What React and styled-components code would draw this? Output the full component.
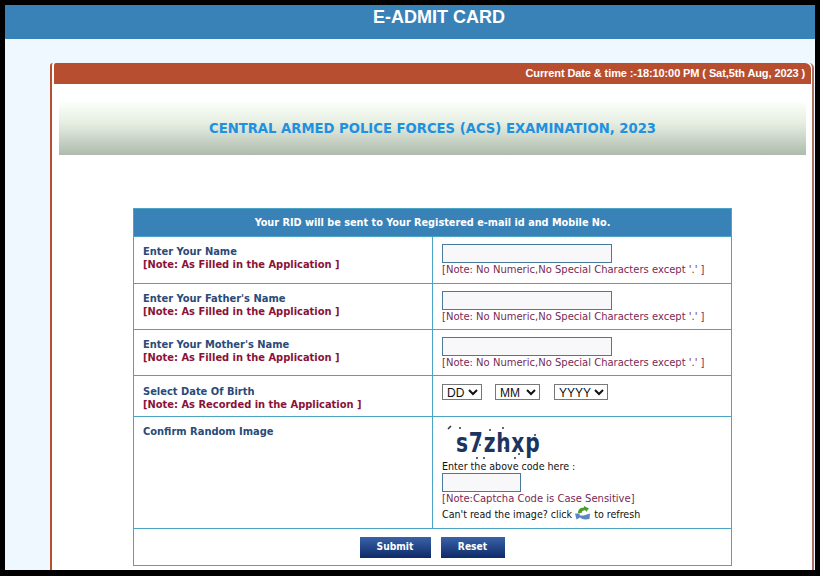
import React from 'react';
import styled, { createGlobalStyle } from 'styled-components';

const Global = createGlobalStyle`
  html, body { margin: 0; padding: 0; background: #000; height: 576px; overflow: hidden; }
`;
const Frame = styled.div`
  width: 810px; height: 565px; margin: 5px 5px 6px; background: #f0f8ff; overflow: hidden;
  font-family: "DejaVu Sans", sans-serif;
`;
const Header = styled.div`
  height: 34px; background: #3882b8; color: #fff; box-sizing: border-box;
  padding: 3px 0 0 58px; text-align: center;
  font: bold 18px/18px "Liberation Sans", Arial, sans-serif;
`;
const Panel = styled.div`
  margin: 27px 1px 0 45px; height: 510px; background: #fff; box-sizing: border-box;
  border-left: 2px solid #b84e30; border-right: 2px solid #a8705e;
  border-top-left-radius: 3px; border-top-right-radius: 5px;
`;
const DateBar = styled.div`
  height: 21px; margin: -3px 1px 0 2px; background: #b84e30; color: #fff; box-sizing: border-box;
  padding: 3px 6px 0 0; text-align: right; border-radius: 2px 6px 0 0; letter-spacing: -0.1px;
  font: bold 11px/14px "Liberation Sans", Arial, sans-serif;
`;
const Banner = styled.div`
  height: 53px; margin: 18px 6px 0 7px; box-sizing: border-box;
  display: flex; align-items: center; justify-content: center;
  background: linear-gradient(#fbfffa, #e6eee2 40%, #adbbad);
  color: #2090e0; font: bold 13.2px/16px "DejaVu Sans", sans-serif;
`;
const FormTable = styled.table`
  margin: 53px 0 0 81px; width: 599px; border-collapse: collapse; table-layout: fixed;
  border: 1px solid #4ba4c6;
`;
const TitleCell = styled.th`
  height: 27px; padding: 0; background: #3882b8; color: #fff; text-align: center;
  border: 1px solid #4ba4c6; font: bold 10.8px/14px "DejaVu Sans Condensed", "DejaVu Sans", sans-serif;
`;
const Row = styled.tr`
  height: ${p => p.$h}px;
`;
const LabelCell = styled.td`
  width: 299px; box-sizing: border-box; padding: ${p => p.$pad || 8}px 9px 0; vertical-align: top;
  border: 1px solid #4ba4c6;
`;
const FieldCell = styled.td`
  padding: ${p => p.$pad || 7}px 9px 0; vertical-align: top; border: 1px solid #4ba4c6;
`;
const Label = styled.div`
  color: #2a4a78; font: bold 11px/13px "DejaVu Sans Condensed", "DejaVu Sans", sans-serif;
`;
const LabelNote = styled.div`
  color: #8a1238; font: bold 11px/13px "DejaVu Sans Condensed", "DejaVu Sans", sans-serif;
`;
const FieldNote = styled.div`
  color: #7a2a55; font: 10px/13px "DejaVu Sans", sans-serif;
`;
const TextInput = styled.input`
  display: block; width: ${p => p.$w}px; height: 19px; box-sizing: border-box; margin: 0;
  border: 1px solid #4a7a9a; background: #f8f8fa; padding: 0;
`;
const DateRow = styled.div`
  display: flex; align-items: center;
`;
const DateSelect = styled.select`
  width: ${p => p.$w}px; height: 16px; margin-right: ${p => p.$gap}px; box-sizing: border-box; padding: 0;
  border: 1px solid #777; background: #fff; color: #111; border-radius: 0;
  font: 12px/14px "Liberation Sans", Arial, sans-serif;
`;
const Captcha = styled.div`
  position: relative; width: 110px; height: 37px;
`;
const CaptchaText = styled.span`
  display: block; padding: 5px 0 0 14px; color: #1c3560; letter-spacing: 1px; white-space: nowrap;
  font: bold 27px/29px "DejaVu Sans", sans-serif; transform: scaleX(.75); transform-origin: 14px 0;
`;
const CaptchaSpeckles = styled.svg`
  position: absolute; left: 0; top: 0;
`;
const PlainLine = styled.div`
  color: #111; font: 10.6px/13px "DejaVu Sans Condensed", "DejaVu Sans", sans-serif; white-space: nowrap;
  margin-top: ${p => p.$mt || 0}px; height: ${p => p.$h || 13}px;
`;
const RefreshIcon = styled.svg`
  vertical-align: -2px; margin: 0 4px 0 3px;
`;
const ButtonCell = styled.td`
  height: 36px; padding: 0; text-align: center; border: 1px solid #4ba4c6;
`;
const ButtonBar = styled.div`
  display: flex; justify-content: center; gap: 10px; margin-left: -1px;
`;
const ActionButton = styled.button`
  width: ${p => p.$w}px; height: 21px; padding: 0; border: 0;
  background: linear-gradient(#3a62a8, #0e2a68); color: #fff;
  font: bold 10.2px/14px "DejaVu Sans Condensed", "DejaVu Sans", sans-serif;
`;

const nameRows = [
  { label: 'Enter Your Name', h: 47 },
  { label: "Enter Your Father's Name", h: 46 },
  { label: "Enter Your Mother's Name", h: 46 },
];
const speckles = [[18,5],[48,7],[61,5],[35,35],[42,35],[73,35],[38,22],[63,25],[93,12],[77,31]];

export default function App() {
  return (
    <>
      <Global />
      <Frame>
        <Header>E-ADMIT CARD</Header>
        <Panel>
          <DateBar>Current Date &amp; time :-18:10:00 PM ( Sat,5th Aug, 2023 )</DateBar>
          <Banner>CENTRAL ARMED POLICE FORCES (ACS) EXAMINATION, 2023</Banner>
          <FormTable>
            <colgroup><col width="299" /><col /></colgroup>
            <tbody>
              <tr><TitleCell colSpan={2}>Your RID will be sent to Your Registered e-mail id and Mobile No.</TitleCell></tr>
              {nameRows.map(r => (
                <Row $h={r.h} key={r.label}>
                  <LabelCell>
                    <Label>{r.label}</Label>
                    <LabelNote>[Note: As Filled in the Application ]</LabelNote>
                  </LabelCell>
                  <FieldCell>
                    <TextInput $w={170} />
                    <FieldNote>[Note: No Numeric,No Special Characters except '.' ]</FieldNote>
                  </FieldCell>
                </Row>
              ))}
              <Row $h={41}>
                <LabelCell $pad={9}>
                  <Label>Select Date Of Birth</Label>
                  <LabelNote>[Note: As Recorded in the Application ]</LabelNote>
                </LabelCell>
                <FieldCell $pad={8}>
                  <DateRow>
                    <DateSelect $w={40} $gap={13}><option>DD</option></DateSelect>
                    <DateSelect $w={45} $gap={14}><option>MM</option></DateSelect>
                    <DateSelect $w={54} $gap={0}><option>YYYY</option></DateSelect>
                  </DateRow>
                </FieldCell>
              </Row>
              <Row $h={112}>
                <LabelCell><Label>Confirm Random Image</Label></LabelCell>
                <FieldCell $pad={6}>
                  <Captcha>
                    <CaptchaText>s7zhxp</CaptchaText>
                    <CaptchaSpeckles width="110" height="42" viewBox="0 0 110 42">
                      <path d="M6 6 L9 3" stroke="#2a3550" strokeWidth="1.6" />
                      {speckles.map(([x, y]) => <circle key={x + '-' + y} cx={x} cy={y} r="1" fill="#2a3550" />)}
                    </CaptchaSpeckles>
                  </Captcha>
                  <PlainLine>Enter the above code here :</PlainLine>
                  <TextInput $w={79} />
                  <FieldNote>[Note:Captcha Code is Case Sensitive]</FieldNote>
                  <PlainLine $mt={1}>Can't read the image? click
                    <RefreshIcon width="15" height="14" viewBox="0 0 15 14">
                      <path d="M3 7 C3 3 6 1.5 9 1.5 L9 0 L14 2.5 L11 6 L10.5 4.2 C8 4 7 5 6.5 7 Z" fill="#4f9a2c" />
                      <path d="M0 7.5 L5 7.5 L4.5 9 C7 10.5 10 9 15 7.5 L14.5 13 C10 14 7 13.5 5 11.5 L1.5 13.5 Z" fill="#5a86c8" />
                    </RefreshIcon>
                    to refresh</PlainLine>
                </FieldCell>
              </Row>
              <tr>
                <ButtonCell colSpan={2}>
                  <ButtonBar>
                    <ActionButton $w={71}>Submit</ActionButton>
                    <ActionButton $w={64}>Reset</ActionButton>
                  </ButtonBar>
                </ButtonCell>
              </tr>
            </tbody>
          </FormTable>
        </Panel>
      </Frame>
    </>
  );
}
